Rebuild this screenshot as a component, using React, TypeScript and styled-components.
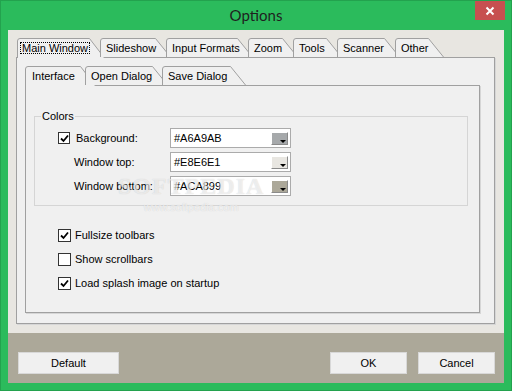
import React from 'react';
import styled, { createGlobalStyle } from 'styled-components';

const GlobalStyle = createGlobalStyle`
  html, body {
    margin: 0;
    padding: 0;
  }
  body {
    width: 512px;
    height: 391px;
    overflow: hidden;
    font-family: "Liberation Sans", Arial, sans-serif;
    font-size: 11px;
    color: #000;
  }
`;

const Window = styled.div`
  width: 512px;
  height: 391px;
  box-sizing: border-box;
  background: #2bbb5c;
  border: 1px solid #23a24e;
  display: flex;
  flex-direction: column;
`;

const TitleBar = styled.div`
  height: 29px;
  display: grid;
  grid-template-columns: 1fr auto 1fr;
  align-items: start;
`;

const Title = styled.div`
  grid-column: 2;
  font-family: Lato, "Open Sans", sans-serif;
  font-size: 15px;
  line-height: 29px;
  color: #1f1f1f;
`;

const CloseButton = styled.div`
  grid-column: 3;
  justify-self: end;
  width: 30px;
  height: 19px;
  margin-right: 6px;
  background: #c75050;
  display: flex;
  align-items: center;
  justify-content: center;
`;

const Client = styled.div`
  flex: 1;
  margin: 0 7px 7px;
  background: #e8e6e1;
  display: flex;
  flex-direction: column;
`;

const ClientBody = styled.div`
  flex: 1;
  padding: 8px 8px 9px;
  display: flex;
  flex-direction: column;
`;

const TabStrip = styled.div`
  display: flex;
  height: 19px;
  padding-left: ${(p) => p.$indent}px;
  position: relative;
  z-index: 1;
`;

const TabBox = styled.div`
  position: relative;
  flex-shrink: 0;
  height: 19px;
  width: ${(p) => p.$w + 16}px;
  margin-right: ${(p) => p.$gap - 16}px;
`;

const TabSvg = styled.svg`
  position: absolute;
  left: 0;
  top: 0;
`;

const TabLabel = styled.span`
  position: relative;
  display: inline-block;
  padding: 4px 0 0 ${(p) => p.$pad}px;
  line-height: 13px;
  white-space: nowrap;
`;

const Focus = styled.span`
  padding: 0 2px;
  outline: 1px dotted #000;
  outline-offset: -1px;
`;

const Panel = styled.div`
  flex: 1;
  background: #f0f0f0;
  border: 1px solid #a0a0a0;
  box-shadow: 1px 1px 0 #d6d6d6;
  display: flex;
  flex-direction: column;
`;

const OuterPanel = styled(Panel)`
  margin-right: 1px;
  padding: 8px 14px 10px 8px;
`;

const InnerPanel = styled(Panel)`
  position: relative;
  padding: 0 11px 0 8px;
`;

const GroupBox = styled.fieldset`
  margin: 24px 0 0;
  padding: 0 0 9px 6px;
  border: 1px solid #d5d5d5;
  min-width: 0;
`;

const Legend = styled.legend`
  padding: 0 1px;
  line-height: 13px;
`;

const Rows = styled.div`
  margin-top: 5px;
  padding-left: 17px;
  display: flex;
  flex-direction: column;
  gap: 4px;
`;

const Row = styled.div`
  display: flex;
  align-items: center;
  height: 20px;
`;

const CheckSlot = styled.div`
  width: 16px;
  display: flex;
`;

const FieldLabel = styled.div`
  width: ${(p) => 96 - p.$shift}px;
  padding-left: ${(p) => p.$shift}px;
  white-space: nowrap;
`;

const ColorInput = styled.div`
  width: 121px;
  height: 20px;
  box-sizing: border-box;
  border: 1px solid #ababab;
  background: #fff;
  display: flex;
  justify-content: space-between;
  padding: 0 2px 0 3px;
`;

const ColorText = styled.span`
  align-self: center;
`;

const Swatch = styled.span`
  position: relative;
  align-self: flex-end;
  margin-bottom: 2px;
  width: 17px;
  height: 13px;
  box-sizing: border-box;
  background: ${(p) => p.$color};
  border-top: 1px solid #fff;
  border-left: 1px solid #fff;
  border-right: 1px solid #8a8a8a;
  border-bottom: 1px solid #8a8a8a;
  &::after {
    content: '';
    position: absolute;
    right: 1px;
    bottom: 1px;
    border-left: 3px solid transparent;
    border-right: 3px solid transparent;
    border-top: 3px solid #000;
  }
`;

const CheckBox = styled.span`
  width: ${(p) => p.$size}px;
  height: ${(p) => p.$size}px;
  box-sizing: border-box;
  border: 1px solid #333;
  background: #fff;
  display: flex;
  align-items: center;
  justify-content: center;
`;

const Options = styled.div`
  margin-top: 17px;
  padding-left: 24px;
  display: flex;
  flex-direction: column;
`;

const OptionRow = styled.label`
  height: 24px;
  display: flex;
  align-items: center;
  gap: 4px;
`;

// softpedia watermark stamped over the page
const Watermark = styled.div`
  position: absolute;
  left: 92px;
  top: 87px;
  display: flex;
  flex-direction: column;
  align-items: center;
  pointer-events: none;
`;

const WatermarkBig = styled.span`
  font-family: "Liberation Serif", serif;
  font-weight: bold;
  font-size: 24px;
  line-height: 26px;
  letter-spacing: 1px;
  color: rgba(255, 255, 255, 0.6);
  text-shadow: 0 0 1px rgba(0, 0, 0, 0.18);
`;

const WatermarkSmall = styled.span`
  margin-top: 2px;
  font-size: 11px;
  color: rgba(255, 255, 255, 0.7);
  text-shadow: 0 0 1px rgba(0, 0, 0, 0.18);
`;

const BottomBar = styled.div`
  height: 50px;
  box-sizing: border-box;
  background: #aca899;
  padding: 19px 9px 0 10px;
  display: flex;
  align-items: flex-start;
  gap: 11px;
`;

const Button = styled.button`
  width: ${(p) => p.$w}px;
  height: 22px;
  margin: 0;
  padding: 0;
  background: #f0f0f0;
  border: 1px solid #d8d8d8;
  font-family: "Liberation Sans", Arial, sans-serif;
  font-size: 11px;
  color: #000;
`;

const Spacer = styled.div`
  flex: 1;
`;

const Tab = ({ label, w, gap = 11, selected = false, focus = false, pad = 6 }) => {
  const W = w + 16;
  const h = selected ? 20 : 19;
  return (
    <TabBox $w={w} $gap={gap}>
      <TabSvg width={W} height={h} viewBox={`0 0 ${W} ${h}`}>
        <path
          d={`M0.5 ${h} V3 Q0.5 0.5 3 0.5 H${w + 0.5} L${W - 0.5} ${h}`}
          fill="#f0f0f0"
          stroke="#a0a0a0"
        />
      </TabSvg>
      <TabLabel $pad={pad}>{focus ? <Focus>{label}</Focus> : label}</TabLabel>
    </TabBox>
  );
};

const Check = ({ checked, size = 13 }) => (
  <CheckBox $size={size}>
    {checked && (
      <svg width="9" height="9" viewBox="0 0 9 9">
        <path d="M1 4.5 L3.5 7 L8 1.5" fill="none" stroke="#000" strokeWidth="1.8" />
      </svg>
    )}
  </CheckBox>
);

const colors = [
  { label: 'Background:', value: '#A6A9AB', color: '#a6a9ab', check: true },
  { label: 'Window top:', value: '#E8E6E1', color: '#e8e6e1' },
  { label: 'Window bottom:', value: '#ACA899', color: '#aca899' }
];

const options = [
  { label: 'Fullsize toolbars', checked: true },
  { label: 'Show scrollbars', checked: false },
  { label: 'Load splash image on startup', checked: true }
];

export default function App() {
  return (
    <>
      <GlobalStyle />
      <Window>
        <TitleBar>
          <Title>Options</Title>
          <CloseButton>
            <svg width="10" height="10" viewBox="0 0 10 10">
              <path d="M1.5 1.5 L8.5 8.5 M8.5 1.5 L1.5 8.5" stroke="#fff" strokeWidth="2" />
            </svg>
          </CloseButton>
        </TitleBar>
        <Client>
          <ClientBody>
            <TabStrip $indent={1}>
              <Tab label="Main Window" w={72} selected focus pad={3} />
              <Tab label="Slideshow" w={55} />
              <Tab label="Input Formats" w={71} />
              <Tab label="Zoom" w={34} />
              <Tab label="Tools" w={33} />
              <Tab label="Scanner" w={47} />
              <Tab label="Other" w={33} />
            </TabStrip>
            <OuterPanel>
              <TabStrip $indent={0}>
                <Tab label="Interface" w={55} gap={5} selected pad={7} />
                <Tab label="Open Dialog" w={67} gap={10} />
                <Tab label="Save Dialog" w={68} />
              </TabStrip>
              <InnerPanel>
                <GroupBox>
                  <Legend>Colors</Legend>
                  <Rows>
                    {colors.map((c) => (
                      <Row key={c.label}>
                        <CheckSlot>{c.check && <Check checked size={12} />}</CheckSlot>
                        <FieldLabel $shift={c.check ? 2 : 0}>{c.label}</FieldLabel>
                        <ColorInput>
                          <ColorText>{c.value}</ColorText>
                          <Swatch $color={c.color} />
                        </ColorInput>
                      </Row>
                    ))}
                  </Rows>
                </GroupBox>
                <Options>
                  {options.map((o) => (
                    <OptionRow key={o.label}>
                      <Check checked={o.checked} />
                      {o.label}
                    </OptionRow>
                  ))}
                </Options>
                <Watermark>
                  <WatermarkBig>SOFTPEDIA</WatermarkBig>
                  <WatermarkSmall>www.softpedia.com</WatermarkSmall>
                </Watermark>
              </InnerPanel>
            </OuterPanel>
          </ClientBody>
          <BottomBar>
            <Button $w={101}>Default</Button>
            <Spacer />
            <Button $w={77}>OK</Button>
            <Button $w={77}>Cancel</Button>
          </BottomBar>
        </Client>
      </Window>
    </>
  );
}
